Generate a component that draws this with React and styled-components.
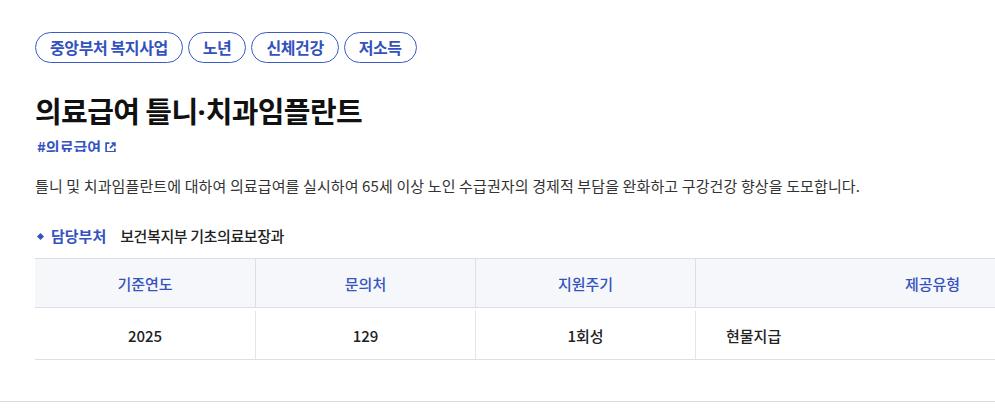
import React from 'react'
import styled, { createGlobalStyle } from 'styled-components'

const GlobalStyle = createGlobalStyle`
  html, body {
    margin: 0;
    padding: 0;
    background: #fff;
    overflow: hidden;
  }
  body {
    font-family: "Noto Sans CJK KR", "Noto Sans", sans-serif;
    color: #222;
  }
`

const Page = styled.section`
  width: 995px;
  height: 418px;
  overflow: hidden;
`

const Inner = styled.div`
  padding: 32px 0 41px 35px;
  border-bottom: 1px solid #d9d9d9;
`

const Tags = styled.ul`
  display: flex;
  gap: 5px;
  margin: 0;
  padding: 0;
  list-style: none;
`

const Tag = styled.li`
  height: 31px;
  box-sizing: border-box;
  padding: 0 14px;
  border: 1px solid #3a5bc7;
  border-radius: 16px;
  color: #3352bd;
  font-size: 16px;
  font-weight: 700;
  line-height: 29px;
  letter-spacing: -0.4px;
`

const Title = styled.h1`
  margin: 27px 0 0;
  height: 40px;
  font-size: 29px;
  font-weight: 700;
  line-height: 40px;
  letter-spacing: -0.6px;
  color: #111;
`

const Dot = styled.span`
  font-family: "Noto Sans", sans-serif;
  letter-spacing: 0;
  line-height: 0;
`

const HashClip = styled.div`
  height: 20px;
  overflow: hidden;
  margin-top: 2px;
`

const Hash = styled.a`
  display: inline-flex;
  align-items: center;
  gap: 4px;
  margin-left: 2px;
  color: #3553c0;
  font-size: 15px;
  font-weight: 700;
  line-height: 30px;
  text-decoration: none;
`

const Desc = styled.p`
  margin: 23px 0 0;
  font-size: 15px;
  line-height: 22px;
  color: #333;
  letter-spacing: 0.12px;
`

const Dept = styled.div`
  display: flex;
  align-items: center;
  margin-top: 28px;
  font-size: 15px;
  line-height: 22px;
`

const Bullet = styled.span`
  width: 5px;
  height: 5px;
  background: #3553c0;
  transform: rotate(45deg);
  margin: 0 8px 0 3px;
`

const DeptLabel = styled.span`
  color: #3553c0;
  font-weight: 700;
  margin-right: 14px;
`

const DeptValue = styled.span`
  color: #222;
  font-weight: 500;
  letter-spacing: -0.4px;
`

const Table = styled.div`
  margin-top: 11px;
  display: grid;
  grid-template-columns: 220px 220px 220px 474px;
  width: 1134px;
  border-top: 1px solid #dcdfe5;
  border-bottom: 1px solid #dcdfe5;
`

const Head = styled.div`
  height: 48px;
  background: #f5f7fa;
  border-bottom: 1px solid #dcdfe5;
  border-left: ${p => (p.$first ? 'none' : '1px solid #dcdfe5')};
  display: flex;
  align-items: center;
  justify-content: center;
  color: #3553c0;
  font-size: 15px;
  font-weight: 500;
`

const Cell = styled.div`
  height: 48px;
  box-sizing: border-box;
  padding: 0 ${p => (p.$left ? '30px' : '0')};
  display: flex;
  align-items: center;
  justify-content: ${p => (p.$left ? 'flex-start' : 'center')};
  border-left: ${p => (p.$first ? 'none' : '1px solid #e3e5ea')};
  color: #222;
  font-size: 15px;
  font-weight: 500;
  margin-top: 3px;
`

const ExternalIcon = () => (
  <svg width="11" height="11" viewBox="0 0 10 10" fill="none" stroke="#3553c0" strokeWidth="1.5">
    <path d="M4 1H1v8h8V6" />
    <path d="M6 1h3v3M9 1L4.5 5.5" />
  </svg>
)

const heads = ['기준연도', '문의처', '지원주기', '제공유형']
const cells = ['2025', '129', '1회성', '현물지급']

export default function App() {
  return (
    <>
      <GlobalStyle />
      <Page>
        <Inner>
          <Tags>
            <Tag>중앙부처 복지사업</Tag>
            <Tag>노년</Tag>
            <Tag>신체건강</Tag>
            <Tag>저소득</Tag>
          </Tags>
          <Title>의료급여 틀니<Dot>·</Dot>치과임플란트</Title>
          <HashClip>
            <Hash href="#">#의료급여<ExternalIcon /></Hash>
          </HashClip>
          <Desc>
            틀니 및 치과임플란트에 대하여 의료급여를 실시하여 65세 이상 노인 수급권자의 경제적 부담을 완화하고 구강건강 향상을 도모합니다.
          </Desc>
          <Dept>
            <Bullet />
            <DeptLabel>담당부처</DeptLabel>
            <DeptValue>보건복지부 기초의료보장과</DeptValue>
          </Dept>
          <Table>
            {heads.map((h, i) => (
              <Head key={h} $first={i === 0}>{h}</Head>
            ))}
            {cells.map((c, i) => (
              <Cell key={c} $first={i === 0} $left={i === 3}>{c}</Cell>
            ))}
          </Table>
        </Inner>
      </Page>
    </>
  )
}
